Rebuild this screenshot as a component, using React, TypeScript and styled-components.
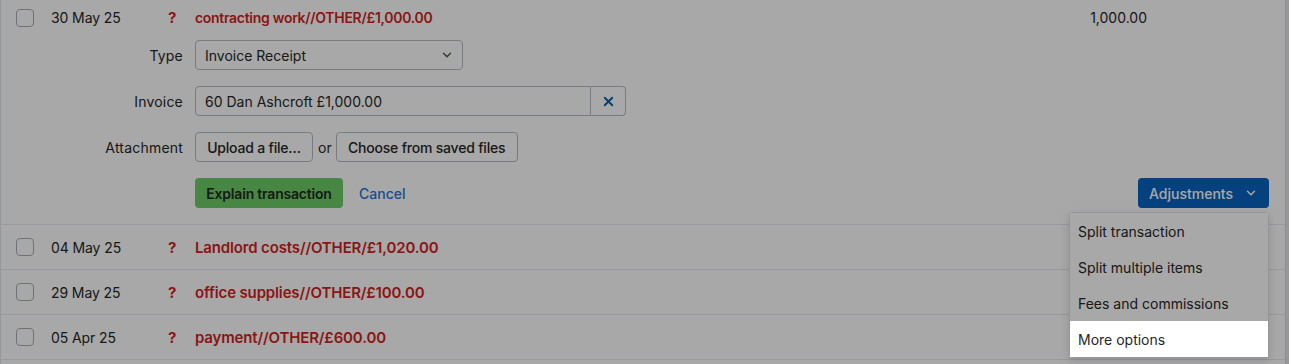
import React from 'react'
import styled, { createGlobalStyle } from 'styled-components'
import { ChevronDown, X } from 'lucide-react'

const GlobalStyle = createGlobalStyle`
  html, body {
    margin: 0;
    padding: 0;
    background: #e3e8ef;
    font-family: Inter, 'Open Sans', sans-serif;
    font-size: 14px;
    color: #262626;
    overflow: hidden;
  }
`

const Page = styled.div`
  width: 1284px;
  min-height: 364px;
  background: #fff;
  border-left: 1px solid #e1e6ed;
  border-right: 1px solid #d2d8df;
`

const Row = styled.div`
  border-bottom: 1px solid #e4e9f0;
`

const RowHead = styled.div<{ $h: number }>`
  display: flex;
  align-items: center;
  height: ${p => p.$h}px;
  padding-left: 15px;
`

const Check = styled.span`
  width: 16px;
  height: 16px;
  border: 1px solid #a8aeb6;
  border-radius: 4px;
  background: #fff;
  flex: none;
`

const DateCell = styled.span`
  width: 117px;
  margin-left: 17px;
  letter-spacing: -0.1px;
`

const Flag = styled.span`
  width: 27px;
  color: #d21f22;
  font-weight: 700;
  font-size: 15px;
`

const Desc = styled.span<{ $large?: boolean }>`
  flex: 1;
  color: #d21f22;
  font-weight: 600;
  font-size: ${p => (p.$large ? 15 : 14)}px;
  letter-spacing: ${p => (p.$large ? -0.15 : -0.3)}px;
`

const Amount = styled.span`
  width: 140px;
  text-align: right;
  margin-right: 138px;
`

const Form = styled.div`
  display: grid;
  grid-template-columns: 182px 1fr;
  column-gap: 12px;
  row-gap: 16px;
  padding: 5px 16px 16px 0;
  align-items: center;
`

const Label = styled.label`
  text-align: right;
  letter-spacing: 0.2px;
`

const Field = styled.div`
  display: flex;
  align-items: center;
  height: 30px;
`

const Select = styled.div`
  box-sizing: border-box;
  width: 268px;
  height: 30px;
  display: flex;
  align-items: center;
  justify-content: space-between;
  padding: 0 8px 0 9px;
  border: 1px solid #b5bcc5;
  border-radius: 4px;
  background: #fff;
`

const InputGroup = styled.div`
  display: flex;
  height: 30px;
`

const Input = styled.div`
  box-sizing: border-box;
  width: 396px;
  height: 30px;
  display: flex;
  align-items: center;
  padding-left: 9px;
  border: 1px solid #b5bcc5;
  border-radius: 4px 0 0 4px;
  background: #fff;
`

const ClearBtn = styled.button`
  box-sizing: border-box;
  width: 35px;
  height: 30px;
  border: 1px solid #b5bcc5;
  border-left: none;
  border-radius: 0 4px 4px 0;
  background: #fff;
  color: #0a5fb4;
  display: flex;
  align-items: center;
  justify-content: center;
  padding: 0;
`

const Btn = styled.button<{ $w: number }>`
  box-sizing: border-box;
  width: ${p => p.$w}px;
  height: 30px;
  border: 1px solid #b5bcc5;
  border-radius: 4px;
  background: #fff;
  font-family: inherit;
  font-size: 14px;
  font-weight: 500;
  letter-spacing: -0.2px;
  color: #262626;
  padding: 0;
`

const Or = styled.span`
  margin: 0 4px 0 5px;
`

const Actions = styled.div`
  display: flex;
  align-items: center;
  height: 30px;
`

const PrimaryBtn = styled.button`
  box-sizing: border-box;
  width: 148px;
  height: 30px;
  border: none;
  border-radius: 4px;
  background: #6ecd67;
  font-family: inherit;
  font-size: 14px;
  font-weight: 600;
  letter-spacing: -0.2px;
  color: #1f2a1f;
  padding: 0;
`

const LinkBtn = styled.a`
  margin-left: 16px;
  color: #2677d2;
  font-weight: 500;
`

const Spacer = styled.div`
  flex: 1;
`

const MenuWrap = styled.div`
  position: relative;
`

const AdjustBtn = styled.button`
  box-sizing: border-box;
  width: 131px;
  height: 30px;
  border: none;
  border-radius: 4px;
  background: #0862c1;
  color: #fff;
  font-family: inherit;
  font-size: 14px;
  font-weight: 500;
  display: flex;
  align-items: center;
  justify-content: center;
  gap: 11px;
  padding: 0;
`

const Menu = styled.ul`
  position: absolute;
  top: 34px;
  right: 0;
  width: 198px;
  margin: 0;
  padding: 0;
  list-style: none;
  background: #fff;
  border: 1px solid #dfe3e8;
  border-radius: 4px;
  box-shadow: 0 3px 10px rgba(0, 0, 0, 0.15);
`

const MenuItem = styled.li<{ $active?: boolean }>`
  height: 36px;
  display: flex;
  align-items: center;
  padding-left: 8px;
  position: ${p => (p.$active ? 'relative' : 'static')};
  z-index: ${p => (p.$active ? 20 : 'auto')};
  background: #fff;
`

const Overlay = styled.div`
  position: fixed;
  inset: 0;
  background: rgba(0, 0, 0, 0.34);
  z-index: 10;
`

const rows = [
  { date: '04 May 25', desc: 'Landlord costs//OTHER/£1,020.00' },
  { date: '29 May 25', desc: 'office supplies//OTHER/£100.00' },
  { date: '05 Apr 25', desc: 'payment//OTHER/£600.00' },
]

export default function App() {
  return (
    <>
      <GlobalStyle />
      <Page>
        <Row>
          <RowHead $h={35}>
            <Check />
            <DateCell>30 May 25</DateCell>
            <Flag>?</Flag>
            <Desc>contracting work//OTHER/£1,000.00</Desc>
            <Amount>1,000.00</Amount>
          </RowHead>
          <Form>
            <Label>Type</Label>
            <Field>
              <Select>
                Invoice Receipt
                <ChevronDown size={14} strokeWidth={2.5} color="#555" />
              </Select>
            </Field>
            <Label>Invoice</Label>
            <Field>
              <InputGroup>
                <Input>60 Dan Ashcroft £1,000.00</Input>
                <ClearBtn>
                  <X size={15} strokeWidth={3} />
                </ClearBtn>
              </InputGroup>
            </Field>
            <Label>Attachment</Label>
            <Field>
              <Btn $w={118}>Upload a file…</Btn>
              <Or>or</Or>
              <Btn $w={182}>Choose from saved files</Btn>
            </Field>
            <span />
            <Actions>
              <PrimaryBtn>Explain transaction</PrimaryBtn>
              <LinkBtn>Cancel</LinkBtn>
              <Spacer />
              <MenuWrap>
                <AdjustBtn>
                  Adjustments
                  <ChevronDown size={14} strokeWidth={2.5} />
                </AdjustBtn>
                <Menu>
                  <MenuItem>Split transaction</MenuItem>
                  <MenuItem>Split multiple items</MenuItem>
                  <MenuItem>Fees and commissions</MenuItem>
                  <MenuItem $active>More options</MenuItem>
                </Menu>
              </MenuWrap>
            </Actions>
          </Form>
        </Row>
        {rows.map(r => (
          <Row key={r.date}>
            <RowHead $h={44}>
              <Check />
              <DateCell>{r.date}</DateCell>
              <Flag>?</Flag>
              <Desc $large>{r.desc}</Desc>
            </RowHead>
          </Row>
        ))}
      </Page>
      <Overlay />
    </>
  )
}
